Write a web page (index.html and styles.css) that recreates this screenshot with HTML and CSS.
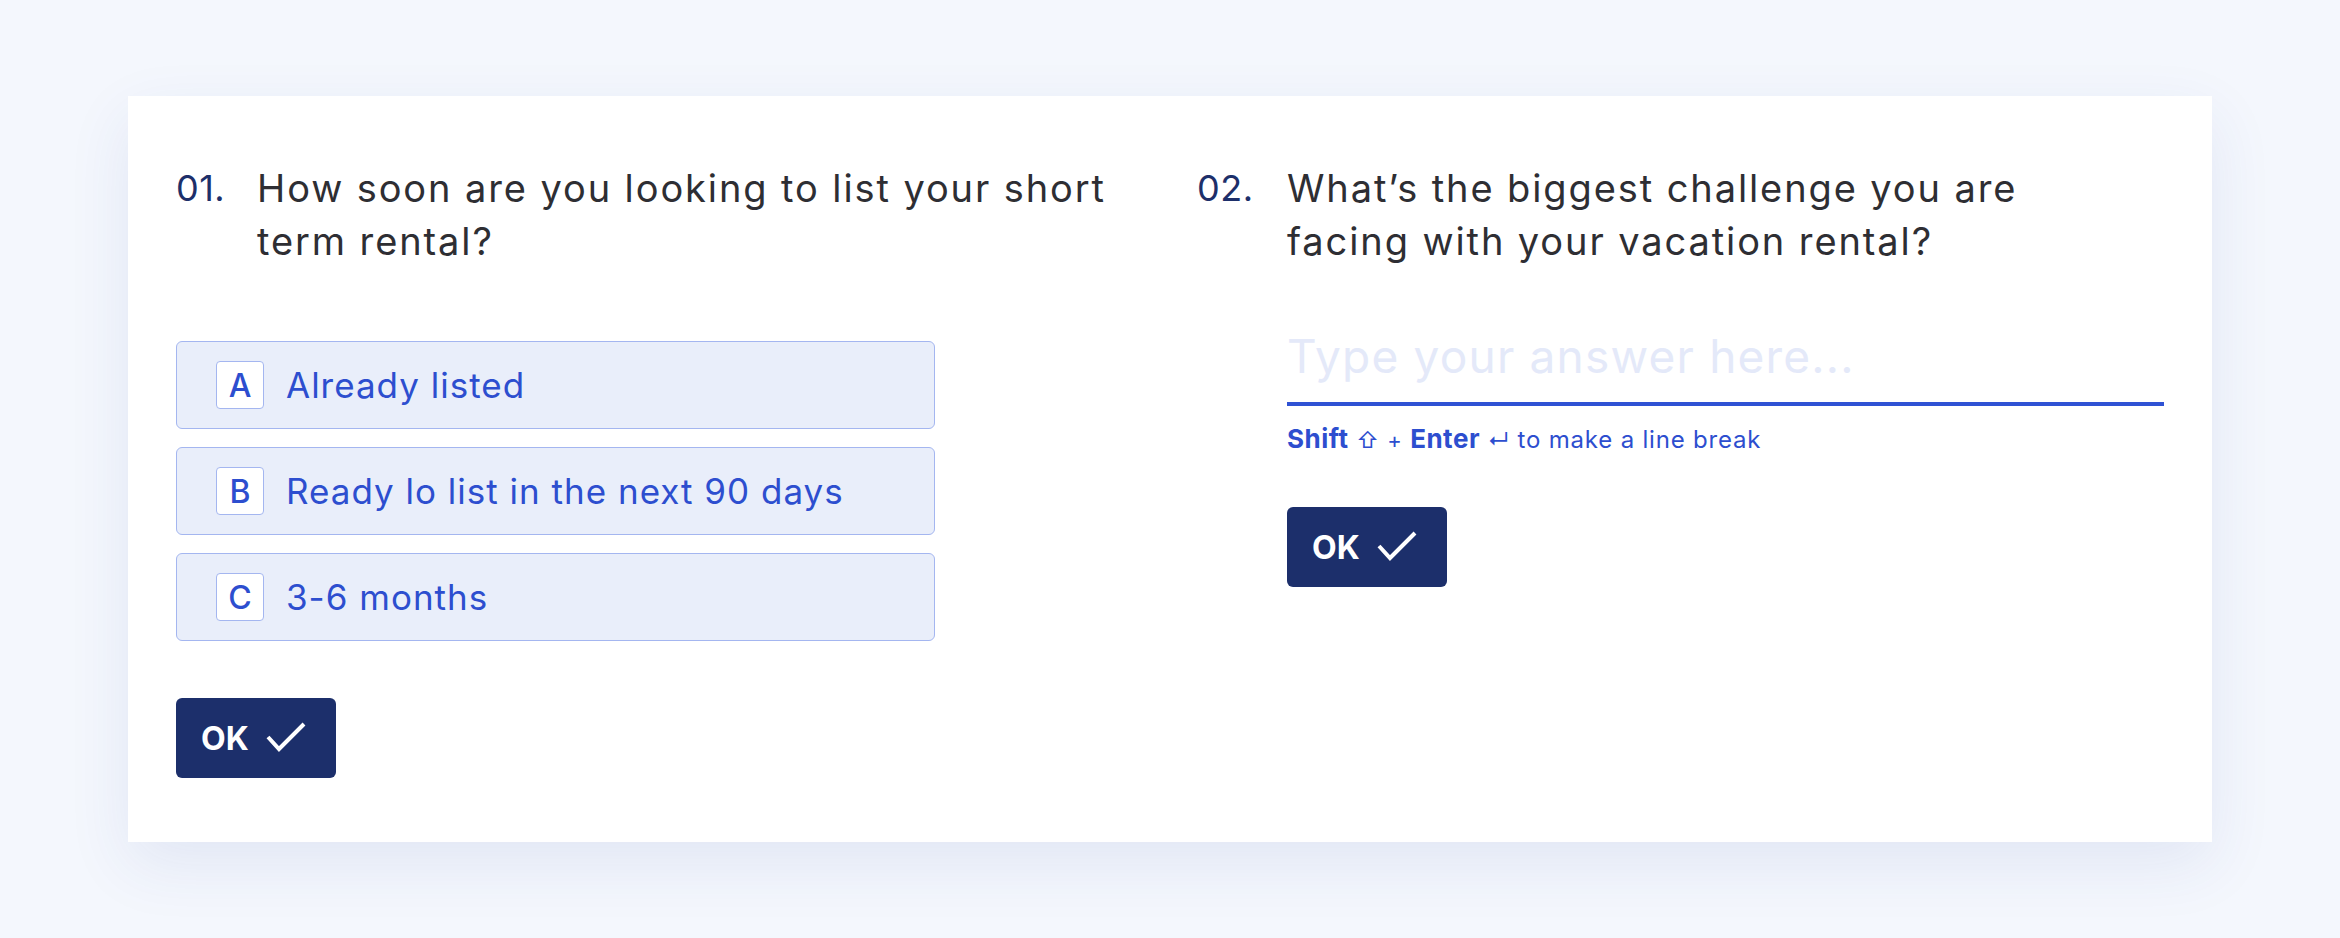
FILE: index.html
```html
<!DOCTYPE html>
<html lang="en">
<head>
<meta charset="utf-8">
<title>Questions</title>
<link rel="stylesheet" href="styles.css">
</head>
<body>
<main class="card">
  <section class="col">
    <div class="question">
      <span class="qnum q1num">01.</span>
      <h2 class="qtext">How soon are you looking to list your short term rental?</h2>
    </div>
    <ul class="options">
      <li class="option"><span class="key">A</span><span class="opt-text">Already listed</span></li>
      <li class="option"><span class="key">B</span><span class="opt-text">Ready lo list in the next 90 days</span></li>
      <li class="option"><span class="key">C</span><span class="opt-text">3-6 months</span></li>
    </ul>
    <button class="ok ok-left" type="button">OK
      <svg class="check" viewBox="0 0 40 30" width="40" height="30"><path d="M2 15 L13 27 L38 2" fill="none" stroke="#fff" stroke-width="4" stroke-linejoin="miter"/></svg>
    </button>
  </section>
  <section class="col">
    <div class="question">
      <span class="qnum q2num">02.</span>
      <h2 class="qtext">What’s the biggest challenge you are facing with your vacation rental?</h2>
    </div>
    <div class="answer">
      <div class="input"><span class="placeholder">Type your answer here...</span></div>
      <p class="hint"><b>Shift</b> <span class="sym">⇧</span> <span class="plus">+</span> <b>Enter</b> <span class="sym">↵</span> to make a line break</p>
      <button class="ok ok-right" type="button">OK
        <svg class="check" viewBox="0 0 40 30" width="40" height="30"><path d="M2 15 L13 27 L38 2" fill="none" stroke="#fff" stroke-width="4" stroke-linejoin="miter"/></svg>
      </button>
    </div>
  </section>
</main>
</body>
</html>
```
FILE: styles.css
```css
* { box-sizing: border-box; }
html, body { margin: 0; padding: 0; }
body {
  background: #f4f7fd;
  font-family: "Inter", "Noto Sans", sans-serif;
  width: 2340px;
  height: 938px;
  overflow: hidden;
}
.card {
  margin: 96px 0 0 128px;
  width: 2084px;
  height: 746px;
  background: #ffffff;
  box-shadow: 0 22px 60px rgba(40, 70, 150, 0.09);
  padding: 66px 48px 64px;
  display: grid;
  grid-template-columns: 967px 967px;
  column-gap: 54px;
}
.col { display: flex; flex-direction: column; align-items: flex-start; }
.question { display: flex; align-items: flex-start; }
.qnum {
  font-size: 36px;
  line-height: 53px;
  color: #1d2f6a;
  font-weight: 400;
  letter-spacing: 0.5px;
}
.q1num { width: 81px; flex: none; }
.q2num { width: 90px; flex: none; }
.qtext {
  margin: 0;
  font-size: 38px;
  line-height: 53px;
  font-weight: 400;
  color: #2e2e33;
  letter-spacing: 1.9px;
}
.col:first-child .qtext { width: 885px; }
.col:last-child .qtext { width: 800px; }
.options {
  list-style: none;
  margin: 73px 0 0;
  padding: 0;
  display: flex;
  flex-direction: column;
  gap: 18px;
}
.option {
  width: 759px;
  height: 88px;
  background: #e9eefa;
  border: 1.5px solid #a4b6f0;
  border-radius: 6px;
  display: flex;
  align-items: center;
  padding-left: 39px;
  gap: 22px;
}
.key {
  width: 48px;
  height: 48px;
  background: #ffffff;
  border: 1.5px solid #a4b6f0;
  border-radius: 4px;
  display: flex;
  align-items: center;
  justify-content: center;
  font-size: 32px;
  font-weight: 500;
  color: #2d4ecf;
}
.opt-text {
  font-size: 35px;
  color: #2d4ecf;
  font-weight: 400;
  letter-spacing: 1px;
}
.ok {
  width: 160px;
  height: 80px;
  border: none;
  border-radius: 6px;
  background: #1c2f6b;
  color: #ffffff;
  font-family: inherit;
  font-size: 32px;
  font-weight: 700;
  display: flex;
  align-items: center;
  padding: 0 0 0 25px;
  gap: 17px;
  letter-spacing: 0;
}
.check { display: block; margin-top: -2px; }
.ok-left { margin-top: 57px; }
.answer { margin-left: 90px; display: flex; flex-direction: column; align-items: flex-start; }
.input {
  margin-top: 58px;
  width: 877px;
  height: 80px;
  padding-bottom: 16px;
  border-bottom: 4px solid #2f52d4;
  font-size: 46px;
  line-height: 60px;
}
.placeholder { color: #e4e9f9; letter-spacing: 1.2px; }
.hint {
  margin: 18px 0 0;
  font-size: 24px;
  line-height: 30px;
  color: #2d4ecf;
  letter-spacing: 0.8px;
}
.hint b { font-weight: 700; font-size: 26px; letter-spacing: 0.5px; }
.hint .sym, .hint .plus { font-size: 22px; }
.ok-right { margin-top: 52px; }
```
